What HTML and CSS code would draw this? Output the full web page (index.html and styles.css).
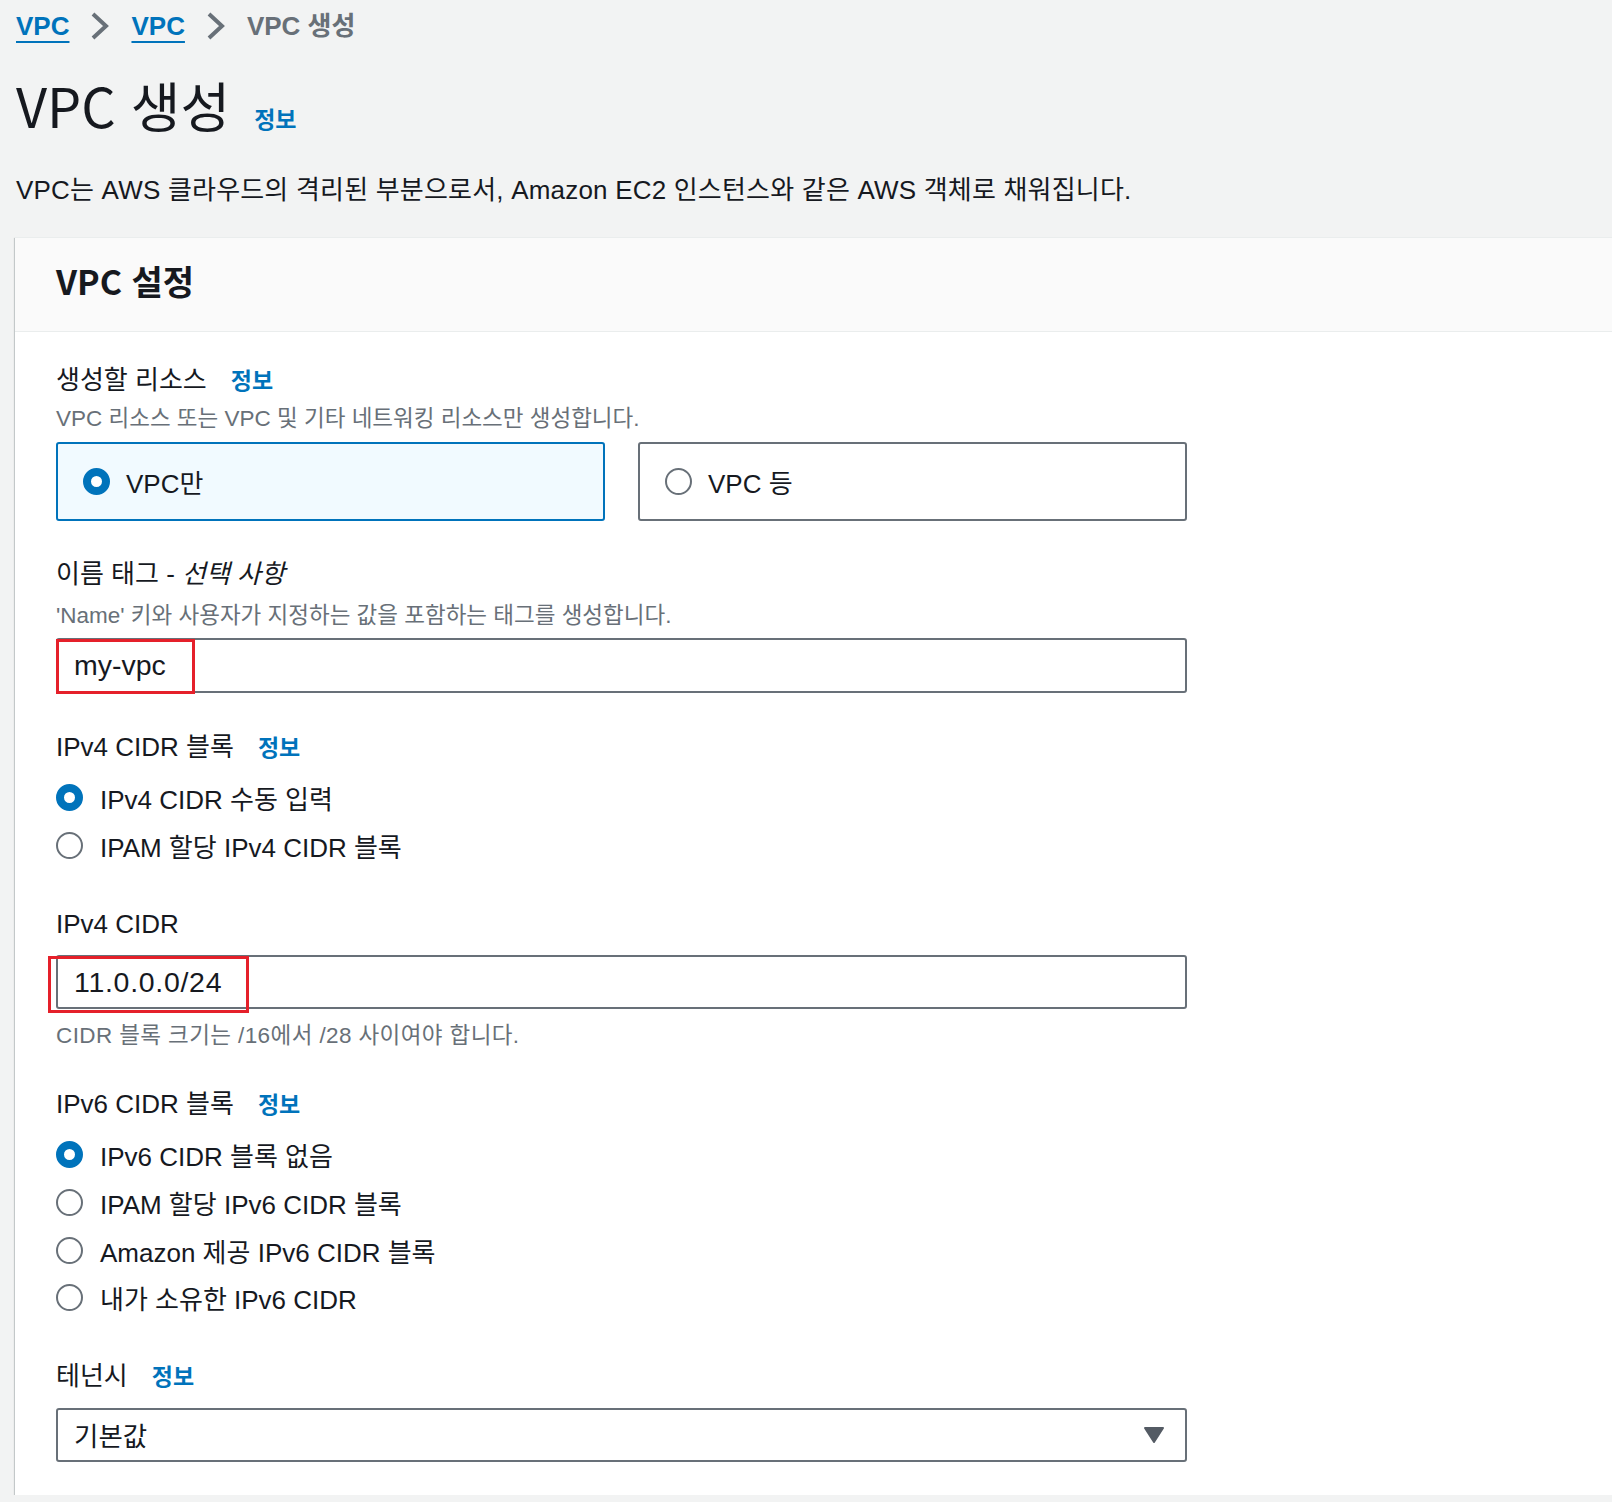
FILE: index.html
```html
<!DOCTYPE html>
<html lang="ko">
<head>
<meta charset="utf-8">
<title>VPC 생성</title>
<link rel="stylesheet" href="styles.css">
</head>
<body>
<div class="page">
  <nav class="crumbs">
    <a class="crumb-link" href="#">VPC</a>
    <svg class="chev" viewBox="0 0 20 30" width="20" height="30"><path d="M3 3 L16 15 L3 27" fill="none" stroke="#687078" stroke-width="4" stroke-linejoin="miter"/></svg>
    <a class="crumb-link" href="#">VPC</a>
    <svg class="chev" viewBox="0 0 20 30" width="20" height="30"><path d="M3 3 L16 15 L3 27" fill="none" stroke="#687078" stroke-width="4" stroke-linejoin="miter"/></svg>
    <span class="crumb-current">VPC 생성</span>
  </nav>

  <div class="title-row">
    <h1 class="title">VPC 생성</h1>
    <a class="info info-title" href="#">정보</a>
  </div>

  <p class="lead">VPC는 AWS 클라우드의 격리된 부분으로서, Amazon EC2 인스턴스와 같은 AWS 객체로 채워집니다.</p>

  <section class="panel">
    <div class="panel-head">
      <h2 class="panel-title">VPC 설정</h2>
    </div>
    <div class="panel-body">
      <div class="form">
        <div class="label-row"><span class="label">생성할 리소스</span><a class="info" href="#">정보</a></div>
        <div class="desc">VPC 리소스 또는 VPC 및 기타 네트워킹 리소스만 생성합니다.</div>
        <div class="tiles">
          <div class="tile tile-on"><span class="radio radio-on"></span><span class="tile-text">VPC만</span></div>
          <div class="tile"><span class="radio"></span><span class="tile-text">VPC 등</span></div>
        </div>

        <div class="label-row gap-name"><span class="label">이름 태그 - <em class="opt">선택 사항</em></span></div>
        <div class="desc desc-name">'Name' 키와 사용자가 지정하는 값을 포함하는 태그를 생성합니다.</div>
        <div class="input input-name">
          <span class="input-text">my-vpc</span>
          <span class="mark mark-name"></span>
        </div>

        <div class="label-row gap-ipv4"><span class="label">IPv4 CIDR 블록</span><a class="info" href="#">정보</a></div>
        <div class="radios radios-4">
          <div class="radio-row"><span class="radio radio-on"></span><span class="radio-text">IPv4 CIDR 수동 입력</span></div>
          <div class="radio-row"><span class="radio"></span><span class="radio-text">IPAM 할당 IPv4 CIDR 블록</span></div>
        </div>

        <div class="label-row gap-cidr"><span class="label">IPv4 CIDR</span></div>
        <div class="input input-cidr">
          <span class="input-text input-num">11.0.0.0/24</span>
          <span class="mark mark-cidr"></span>
        </div>
        <div class="desc desc-cidr">CIDR 블록 크기는 /16에서 /28 사이여야 합니다.</div>

        <div class="label-row gap-ipv6"><span class="label">IPv6 CIDR 블록</span><a class="info" href="#">정보</a></div>
        <div class="radios radios-6">
          <div class="radio-row"><span class="radio radio-on"></span><span class="radio-text">IPv6 CIDR 블록 없음</span></div>
          <div class="radio-row"><span class="radio"></span><span class="radio-text">IPAM 할당 IPv6 CIDR 블록</span></div>
          <div class="radio-row"><span class="radio"></span><span class="radio-text">Amazon 제공 IPv6 CIDR 블록</span></div>
          <div class="radio-row"><span class="radio"></span><span class="radio-text">내가 소유한 IPv6 CIDR</span></div>
        </div>

        <div class="label-row gap-ten"><span class="label">테넌시</span><a class="info" href="#">정보</a></div>
        <div class="input select">
          <span class="input-text select-text">기본값</span>
          <svg class="caret" viewBox="0 0 22 18" width="22" height="18"><path d="M2 2 L20 2 L11 16 Z" fill="#545b64" stroke="#545b64" stroke-width="2" stroke-linejoin="round"/></svg>
        </div>
      </div>
    </div>
  </section>
</div>
</body>
</html>
```

FILE: styles.css
```css
html, body {
  margin: 0;
  padding: 0;
  overflow: hidden;
}
body {
  background: #f2f3f3;
  color: #16191f;
  font-family: "Liberation Sans", "Noto Sans CJK KR", sans-serif;
}
.page {
  padding-left: 16px;
}
.crumbs {
  height: 52px;
  display: flex;
  align-items: center;
  gap: 21px;
  font-size: 26px;
  font-weight: 700;
  line-height: 36px;
}
.crumb-link {
  color: #0073bb;
  text-decoration: underline;
  text-decoration-thickness: 2px;
  text-underline-offset: 6px;
}
.crumb-current {
  color: #687078;
}
.chev {
  display: block;
}
.title-row {
  display: flex;
  align-items: baseline;
  gap: 24px;
  margin-top: 21px;
}
.title {
  margin: 0;
  font-family: "Noto Sans CJK KR", sans-serif;
  font-size: 54px;
  font-weight: 400;
  line-height: 64px;
}
.info {
  color: #0073bb;
  font-family: "Noto Sans CJK KR", sans-serif;
  font-weight: 700;
  font-size: 23px;
  text-decoration: none;
}
.lead {
  margin: 35px 0 0;
  font-size: 26px;
  line-height: 36px;
  letter-spacing: 0.2px;
}
.panel {
  margin: 29px 0 0 -1px;
  width: 1640px;
  background: #fff;
  box-shadow: 0 1px 1px 0 rgba(0, 28, 36, 0.3), 1px 1px 1px 0 rgba(0, 28, 36, 0.15), -1px 1px 1px 0 rgba(0, 28, 36, 0.15);
  border-top: 1px solid #eaeded;
}
.panel-head {
  height: 94px;
  box-sizing: border-box;
  padding: 0 0 8px 41px;
  background: #fafafa;
  border-bottom: 1px solid #eaeded;
  display: flex;
  align-items: center;
}
.panel-title {
  margin: 0;
  font-family: "Noto Sans CJK KR", sans-serif;
  font-size: 34px;
  font-weight: 700;
  line-height: 40px;
}
.panel-body {
  padding: 29px 0 33px 41px;
}
.form {
  width: 1131px;
}
.label-row {
  display: flex;
  align-items: baseline;
  gap: 24px;
  line-height: 36px;
}
.label {
  font-size: 26px;
}
.opt {
  font-style: italic;
}
.desc {
  margin-top: 6px;
  font-size: 22.5px;
  line-height: 30px;
  color: #687078;
}
.tiles {
  margin-top: 8px;
  display: grid;
  grid-template-columns: 1fr 1fr;
  gap: 33px;
}
.tile {
  height: 79px;
  box-sizing: border-box;
  border: 2px solid #687078;
  border-radius: 3px;
  display: flex;
  align-items: center;
  padding-left: 25px;
  gap: 16px;
  background: #fff;
}
.tile-on {
  border-color: #0073bb;
  background: #f1faff;
}
.tile-text {
  font-size: 26px;
}
.radio {
  width: 27px;
  height: 27px;
  box-sizing: border-box;
  border-radius: 50%;
  border: 2.5px solid #687078;
  background: #fff;
  flex: none;
}
.radio-on {
  border: 8.5px solid #0073bb;
}
.gap-name { margin-top: 35px; }
.desc-name { margin-top: 9px; }
.input {
  position: relative;
  box-sizing: border-box;
  height: 55px;
  border: 2px solid #687078;
  border-radius: 3px;
  background: #fff;
  display: flex;
  align-items: center;
  padding-left: 16px;
}
.input-name { margin-top: 7px; }
.input-text {
  font-size: 28.5px;
  color: #16191f;
}
.input-num {
  letter-spacing: 0.7px;
}
.select-text {
  font-size: 26.5px;
}
.mark {
  position: absolute;
  border: 3px solid #e5202a;
  box-sizing: border-box;
}
.mark-name {
  left: -2px;
  top: -1px;
  width: 139px;
  height: 55px;
}
.gap-ipv4 { margin-top: 35px; }
.radios-4 {
  margin-top: 9px;
}
.radios-6 {
  margin-top: 9px;
}
.radio-row {
  height: 47.6px;
  display: flex;
  align-items: center;
  gap: 17px;
}
.radio-text {
  font-size: 26px;
}
.gap-cidr { margin-top: 37px; }
.input-cidr {
  margin-top: 13px;
  height: 54px;
}
.mark-cidr {
  left: -10px;
  top: -1px;
  width: 201px;
  height: 57px;
}
.desc-cidr {
  margin-top: 12px;
  letter-spacing: 0.4px;
}
.gap-ipv6 { margin-top: 34px; }
.gap-ten { margin-top: 35px; }
.select {
  margin-top: 14px;
  height: 54px;
}
.caret {
  position: absolute;
  right: 20px;
  top: 16px;
}
```
